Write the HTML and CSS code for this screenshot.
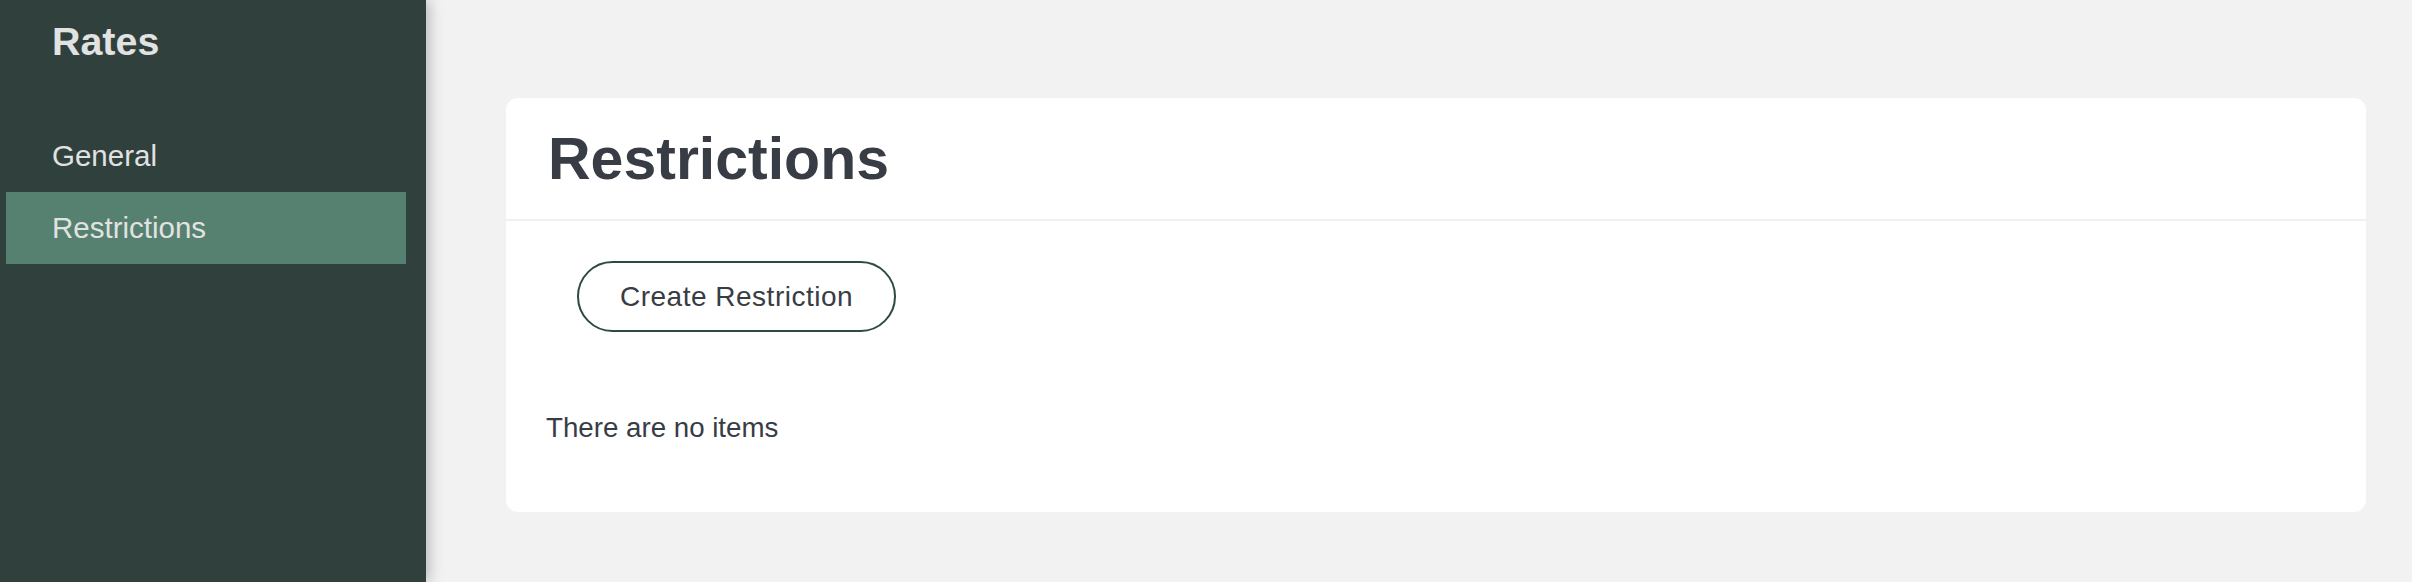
FILE: index.html
```html
<!DOCTYPE html>
<html lang="en">
<head>
<meta charset="utf-8">
<title>Restrictions</title>
<link rel="stylesheet" href="styles.css">
</head>
<body>
<div class="app">
  <aside class="sidebar">
    <h2 class="sidebar-title">Rates</h2>
    <nav class="nav">
      <a class="nav-item" href="#">General</a>
      <a class="nav-item active" href="#">Restrictions</a>
    </nav>
  </aside>
  <main class="main">
    <section class="card">
      <header class="card-header">
        <h1 class="card-title">Restrictions</h1>
      </header>
      <div class="card-body">
        <button class="btn-outline" type="button">Create Restriction</button>
        <p class="empty">There are no items</p>
      </div>
    </section>
  </main>
</div>
</body>
</html>
```
FILE: styles.css
```css
* { box-sizing: border-box; }
html, body {
  margin: 0;
  padding: 0;
  height: 100%;
}
body {
  font-family: "Liberation Sans", Arial, Helvetica, sans-serif;
  background: #f2f2f2;
  color: #383c45;
}
.app {
  display: flex;
  min-height: 100vh;
}
.sidebar {
  width: 426px;
  flex: 0 0 426px;
  background: #2f403d;
  color: #e2e2e2;
  padding: 19px 20px 0 6px;
  box-shadow: 2px 0 14px rgba(0, 0, 0, 0.28);
  position: relative;
  z-index: 1;
}
.sidebar-title {
  margin: 0 0 56px 46px;
  font-size: 39.4px;
  font-weight: 700;
  line-height: 45px;
  color: #e2e2e2;
}
.nav {
  display: flex;
  flex-direction: column;
}
.nav-item {
  display: block;
  height: 72px;
  line-height: 72px;
  padding-left: 46px;
  font-size: 29.5px;
  color: #e2e2e2;
  text-decoration: none;
}
.nav-item.active {
  background: #568070;
}
.main {
  flex: 1;
  padding: 98px 46px 40px 80px;
}
.card {
  background: #ffffff;
  border-radius: 12px;
}
.card-header {
  padding: 27px 42px 26px;
  border-bottom: 2px solid #f1f1f1;
}
.card-title {
  margin: 0;
  font-size: 59px;
  font-weight: 700;
  line-height: 68px;
  color: #373c45;
}
.card-body {
  padding: 40px 40px 68px;
}
.btn-outline {
  display: inline-block;
  margin-left: 31px;
  height: 71px;
  padding: 0 41px;
  border: 2px solid #2f4a40;
  border-radius: 36px;
  background: #ffffff;
  font-family: inherit;
  font-size: 28px;
  letter-spacing: 0.5px;
  color: #383c45;
  cursor: pointer;
}
.empty {
  margin: 80px 0 0;
  font-size: 27.7px;
  line-height: 32px;
  color: #383c45;
}
```
